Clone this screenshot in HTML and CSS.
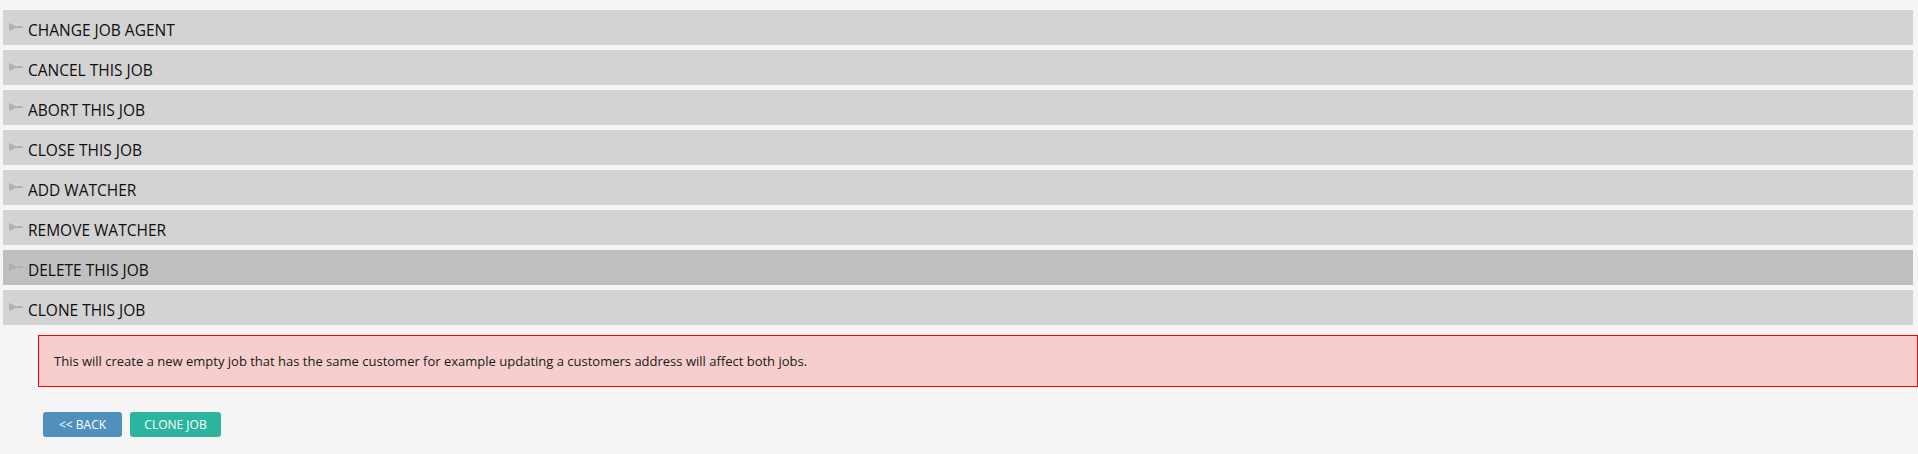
FILE: index.html
```
<!DOCTYPE html>
<html>
<head>
<meta charset="utf-8">
<link rel="stylesheet" href="styles.css">
</head>
<body>
<div class="page">
  <div class="acc-row"><svg class="arrow" viewBox="0 0 14 8"><polygon points="0,0 9,4 0,8"/><rect x="8" y="3" width="6" height="2"/></svg><span class="label">CHANGE JOB AGENT</span></div>
  <div class="acc-row"><svg class="arrow" viewBox="0 0 14 8"><polygon points="0,0 9,4 0,8"/><rect x="8" y="3" width="6" height="2"/></svg><span class="label">CANCEL THIS JOB</span></div>
  <div class="acc-row"><svg class="arrow" viewBox="0 0 14 8"><polygon points="0,0 9,4 0,8"/><rect x="8" y="3" width="6" height="2"/></svg><span class="label">ABORT THIS JOB</span></div>
  <div class="acc-row"><svg class="arrow" viewBox="0 0 14 8"><polygon points="0,0 9,4 0,8"/><rect x="8" y="3" width="6" height="2"/></svg><span class="label">CLOSE THIS JOB</span></div>
  <div class="acc-row"><svg class="arrow" viewBox="0 0 14 8"><polygon points="0,0 9,4 0,8"/><rect x="8" y="3" width="6" height="2"/></svg><span class="label">ADD WATCHER</span></div>
  <div class="acc-row"><svg class="arrow" viewBox="0 0 14 8"><polygon points="0,0 9,4 0,8"/><rect x="8" y="3" width="6" height="2"/></svg><span class="label">REMOVE WATCHER</span></div>
  <div class="acc-row active"><svg class="arrow" viewBox="0 0 14 8"><polygon points="0,0 9,4 0,8"/><rect x="8" y="3" width="6" height="2"/></svg><span class="label">DELETE THIS JOB</span></div>
  <div class="acc-row"><svg class="arrow" viewBox="0 0 14 8"><polygon points="0,0 9,4 0,8"/><rect x="8" y="3" width="6" height="2"/></svg><span class="label">CLONE THIS JOB</span></div>
  <div class="panel">
    <div class="alert">This will create a new empty job that has the same customer for example updating a customers address will affect both jobs.</div>
    <div class="actions">
      <button class="btn btn-back">&lt;&lt; BACK</button>
      <button class="btn btn-clone">CLONE JOB</button>
    </div>
  </div>
</div>
</body>
</html>
```
FILE: styles.css
```
html, body {
  margin: 0;
  padding: 0;
  background: #f5f5f5;
  font-family: "Open Sans", "Noto Sans", sans-serif;
  overflow: hidden;
}
.page {
  padding: 10px 5px 0 3px;
}
.acc-row {
  height: 35px;
  margin-bottom: 5px;
  background: #d3d3d3;
  display: flex;
  align-items: center;
  padding-left: 6px;
  box-sizing: border-box;
  color: #0d0d0d;
  font-size: 15.5px;
}
.acc-row.active {
  background: #c0c0c0;
}
.arrow {
  width: 14px;
  height: 8px;
  margin-right: 5px;
  margin-top: -1px;
  fill: #b0b0b0;
  flex: none;
}
.label {
  padding-top: 4px;
}
.panel {
  padding: 5px 0 0 35px;
}
.alert {
  width: 1880px;
  box-sizing: border-box;
  background: #f6cecd;
  border: 1px solid #ff0000;
  padding: 16px 15px;
  font-size: 13px;
  line-height: 18px;
  color: #1a1a1a;
}
.actions {
  display: flex;
  gap: 8px;
  padding: 25px 0 0 5px;
}
.btn {
  height: 25px;
  border: none;
  border-radius: 3px;
  color: #fff;
  font-family: "Open Sans", "Noto Sans", sans-serif;
  font-size: 12px;
  padding: 0;
  line-height: 25px;
  text-align: center;
}
.btn-back {
  background: #5190bd;
  width: 79px;
}
.btn-clone {
  background: #2bb49e;
  width: 91px;
}
```
